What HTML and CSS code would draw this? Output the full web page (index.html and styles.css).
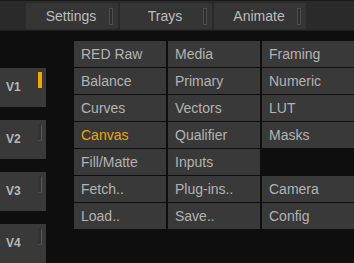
FILE: index.html
```html
<!DOCTYPE html>
<html lang="en">
<head>
    <meta charset="UTF-8">
    <title>Panel Menu</title>
    <link rel="stylesheet" href="styles.css">
</head>
<body>
    <div class="topbar">
        <div class="tab">Settings<span class="tab-mark"></span></div>
        <div class="tab">Trays<span class="tab-mark"></span></div>
        <div class="tab">Animate<span class="tab-mark"></span></div>
    </div>
    <div class="main">
        <div class="layers">
            <div class="layer">V1<span class="layer-mark on"></span></div>
            <div class="layer">V2<span class="layer-mark"></span></div>
            <div class="layer">V3<span class="layer-mark"></span></div>
            <div class="layer">V4<span class="layer-mark"></span></div>
        </div>
        <div class="menu">
            <div class="item">RED Raw</div>
            <div class="item">Media</div>
            <div class="item">Framing</div>
            <div class="item">Balance</div>
            <div class="item">Primary</div>
            <div class="item">Numeric</div>
            <div class="item">Curves</div>
            <div class="item">Vectors</div>
            <div class="item">LUT</div>
            <div class="item active">Canvas</div>
            <div class="item">Qualifier</div>
            <div class="item">Masks</div>
            <div class="item">Fill/Matte</div>
            <div class="item">Inputs</div>
            <div class="item empty"></div>
            <div class="item">Fetch..</div>
            <div class="item">Plug-ins..</div>
            <div class="item">Camera</div>
            <div class="item">Load..</div>
            <div class="item">Save..</div>
            <div class="item">Config</div>
        </div>
    </div>
</body>
</html>
```

FILE: styles.css
```css
body {
    margin: 0;
    width: 354px;
    height: 263px;
    overflow: hidden;
    background-color: #0e0e0e;
    font-family: "Liberation Sans", Arial, sans-serif;
}
.topbar {
    display: flex;
    gap: 2px;
    height: 26px;
    padding: 2px 0 1px 26px;
    border-top: 1px solid #1a1a1a;
    background-color: #2a2a2a;
    border-bottom: 1px solid #1e1e1e;
}
.tab {
    position: relative;
    width: 92px;
    height: 26px;
    line-height: 26px;
    text-align: center;
    font-size: 14px;
    color: #bdbdbd;
    background-color: #353535;
    padding-right: 2px;
    box-sizing: border-box;
}
.tab-mark {
    position: absolute;
    top: 5px;
    right: 5px;
    width: 2px;
    height: 15px;
    border: 1px solid #4e4e4e;
    background-color: #2e2e2e;
}
.main {
    display: flex;
}
.layers {
    display: flex;
    flex-direction: column;
    gap: 13px;
    margin-top: 37px;
    width: 46px;
}
.layer {
    position: relative;
    height: 39px;
    line-height: 39px;
    padding-left: 6px;
    font-size: 12px;
    font-weight: bold;
    color: #b8b8b8;
    background-color: #393939;
}
.layer-mark {
    position: absolute;
    top: 4px;
    right: 4px;
    width: 3px;
    height: 15px;
    border-right: 1px solid #585858;
    border-bottom: 1px solid #4a4a4a;
    border-top: 1px solid #2e2e2e;
    background-color: #333;
}
.layer-mark.on {
    width: 4px;
    height: 16px;
    border: none;
    background-color: #f5a800;
}
.menu {
    display: grid;
    grid-template-columns: repeat(3, 92px);
    grid-auto-rows: 26px;
    column-gap: 2px;
    row-gap: 1px;
    margin: 10px 0 0 28px;
}
.item {
    padding-left: 7px;
    line-height: 26px;
    font-size: 14px;
    color: #b3b3b3;
    background-color: #393939;
}
.item.active {
    color: #f0a30a;
}
.item.empty {
    background-color: transparent;
}
```
